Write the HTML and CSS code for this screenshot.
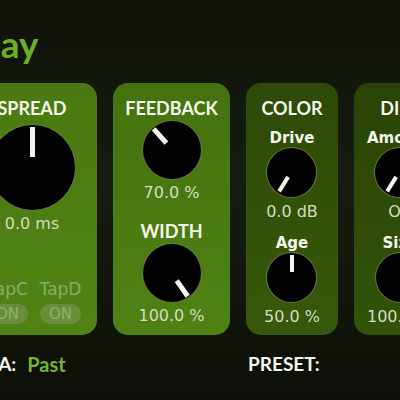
FILE: index.html
```html
<!DOCTYPE html>
<html lang="en">
<head>
    <meta charset="UTF-8">
    <meta name="viewport" content="width=device-width, initial-scale=1.0">
    <title>Delay</title>
    <link rel="stylesheet" href="styles.css">
</head>
<body>
    <div class="plugin">
        <header class="plugin-header">
            <h1 class="plugin-title">Delay</h1>
        </header>

        <main class="panels">
            <!-- Taps: time / spread knobs and the tap toggles -->
            <section class="panel panel-taps">
                <div class="tap-knobs">
                    <div class="control control-large">
                        <h2 class="panel-title">TIME</h2>
                        <div class="knob knob-large"><span class="knob-hand" style="--angle: 30deg"></span></div>
                        <div class="value">350 ms</div>
                    </div>
                    <div class="control control-large">
                        <h2 class="panel-title">SPREAD</h2>
                        <div class="knob knob-large"><span class="knob-hand" style="--angle: 0deg"></span></div>
                        <div class="value">0.0 ms</div>
                    </div>
                </div>
                <div class="taps">
                    <div class="tap"><span class="tap-label">TapA</span><span class="tap-toggle">ON</span></div>
                    <div class="tap"><span class="tap-label">TapB</span><span class="tap-toggle">ON</span></div>
                    <div class="tap"><span class="tap-label">TapC</span><span class="tap-toggle">ON</span></div>
                    <div class="tap"><span class="tap-label">TapD</span><span class="tap-toggle">ON</span></div>
                </div>
            </section>

            <section class="panel panel-feedback">
                <div class="control">
                    <h2 class="panel-title">FEEDBACK</h2>
                    <div class="knob knob-medium"><span class="knob-hand" style="--angle: -42deg"></span></div>
                    <div class="value">70.0 %</div>
                </div>
                <div class="control control-next">
                    <h2 class="panel-title">WIDTH</h2>
                    <div class="knob knob-medium"><span class="knob-hand" style="--angle: 145deg"></span></div>
                    <div class="value">100.0 %</div>
                </div>
            </section>

            <section class="panel panel-color">
                <h2 class="panel-title">COLOR</h2>
                <div class="control control-small">
                    <div class="knob-label">Drive</div>
                    <div class="knob knob-small"><span class="knob-hand" style="--angle: -148deg"></span></div>
                    <div class="value">0.0 dB</div>
                </div>
                <div class="control control-small control-next">
                    <div class="knob-label">Age</div>
                    <div class="knob knob-small"><span class="knob-hand" style="--angle: 0deg"></span></div>
                    <div class="value">50.0 %</div>
                </div>
            </section>

            <section class="panel panel-diffuse">
                <h2 class="panel-title">DIFF</h2>
                <div class="control control-small">
                    <div class="knob-label">Amount</div>
                    <div class="knob knob-small"><span class="knob-hand" style="--angle: -148deg"></span></div>
                    <div class="value">Off</div>
                </div>
                <div class="control control-small control-next">
                    <div class="knob-label">Size</div>
                    <div class="knob knob-small"><span class="knob-hand" style="--angle: 140deg"></span></div>
                    <div class="value">100.0 %</div>
                </div>
            </section>
        </main>

        <footer class="plugin-footer">
            <div class="footer-era">
                <span class="footer-label">ERA:</span>
                <span class="footer-value">Past</span>
            </div>
            <div class="footer-preset">
                <span class="footer-label">PRESET:</span>
            </div>
        </footer>
    </div>
</body>
</html>
```

FILE: styles.css
```css
body {
    margin: 0;
    height: 400px;
    overflow: hidden;
    background: linear-gradient(180deg, #0f1309 0%, #171c10 45%, #0d1008 100%);
}

.plugin {
    width: 589px;
    margin-left: -159px;
    padding: 0 16px;
}

/* Title */
.plugin-header {
    padding: 24px 0 0 87px;
}

.plugin-title {
    margin: 0;
    font: 700 37px/40px Lato, sans-serif;
    color: #6cb024;
}

/* Panel row */
.panels {
    display: flex;
    gap: 16px;
    margin-top: 19px;
}

.panel {
    box-sizing: border-box;
    flex: none;
    height: 252px;
    padding: 15px 10px 11px;
    border-radius: 15px;
    display: flex;
    flex-direction: column;
    align-items: center;
}

.panel-taps {
    width: 240px;
    background: linear-gradient(180deg, #4a7911 0%, #508313 100%);
}

.panel-feedback {
    width: 117px;
    background: linear-gradient(180deg, #45720f 0%, #4f8213 100%);
}

.panel-color {
    width: 92px;
    background: linear-gradient(180deg, #2d4a07 0%, #38590b 100%);
}

.panel-diffuse {
    width: 92px;
    background: linear-gradient(180deg, #294406 0%, #33530a 100%);
}

.panel-title {
    margin: 0;
    font: 700 18px/20px Lato, sans-serif;
    color: #f3f6ea;
    white-space: nowrap;
}

.control {
    display: flex;
    flex-direction: column;
    align-items: center;
}

.control-next {
    margin-top: 19px;
}

.control-small.control-next {
    margin-top: 13px;
}

.control-small .knob-label {
    margin-top: 11px;
}

.control-small.control-next .knob-label {
    margin-top: 0;
}

.knob-label {
    font: 700 15px/18px "DejaVu Sans", sans-serif;
    color: #f3f6ea;
    white-space: nowrap;
}

.value {
    margin-top: 5px;
    font: 16px/18px "DejaVu Sans", sans-serif;
    color: #d4dcc0;
    white-space: nowrap;
}

.control-small .value {
    margin-top: 6px;
}

/* Knobs */
.knob {
    position: relative;
    border-radius: 50%;
    background: #020202;
    box-shadow: 0 0 0 1px #66783c;
}

.knob-large {
    width: 85px;
    height: 85px;
    margin-top: 7px;
}

.knob-medium {
    width: 58px;
    height: 58px;
    margin-top: 3px;
}

.knob-small {
    width: 49px;
    height: 49px;
    margin-top: 1px;
}

.knob-hand {
    position: absolute;
    inset: 0;
    transform: rotate(var(--angle));
}

.knob-hand::before {
    content: "";
    position: absolute;
    left: 50%;
    top: 1px;
    width: 5px;
    height: 19px;
    margin-left: -2.5px;
    background: #f4f4ef;
}

.knob-large .knob-hand::before {
    top: 2px;
    height: 30px;
}

.knob-small .knob-hand::before {
    top: 2px;
    height: 17px;
    width: 4px;
    margin-left: -2px;
}

/* Tap toggles */
.tap-knobs {
    display: flex;
}

.control-large {
    width: 110px;
}

.taps {
    align-self: stretch;
    display: flex;
    justify-content: flex-end;
    margin-top: auto;
}

.tap {
    width: 53px;
    display: flex;
    flex-direction: column;
    align-items: center;
}

.tap-label {
    font: 17px/18px "DejaVu Sans", sans-serif;
    color: #8eaa6a;
}

.tap-toggle {
    margin-top: 6px;
    width: 41px;
    height: 20px;
    border-radius: 10px;
    background: #698d3d;
    color: #92b06a;
    font: 15px/20px "DejaVu Sans", sans-serif;
    text-align: center;
}

/* Footer */
.plugin-footer {
    display: flex;
    margin-top: 18px;
    padding-left: 118px;
    font: 700 19px/22px Lato, sans-serif;
}

.footer-era {
    width: 273px;
    display: flex;
    gap: 11px;
}

.footer-label {
    color: #f3f6ea;
}

.footer-value {
    font-size: 20px;
    color: #78b335;
}
```
